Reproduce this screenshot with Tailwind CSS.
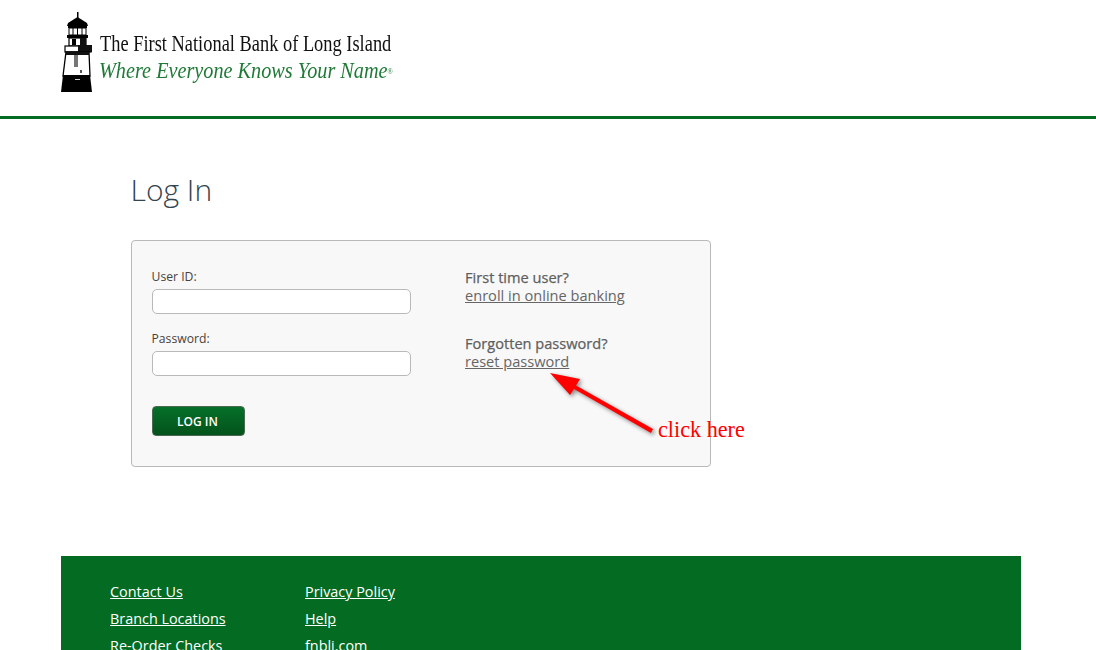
<!DOCTYPE html>
<html lang="en">
<head>
  <meta charset="UTF-8" />
  <title>Log In - The First National Bank of Long Island</title>
  <script src="https://cdn.jsdelivr.net/npm/@tailwindcss/browser@4"></script>
</head>
<body class="h-[650px] overflow-hidden bg-white font-['Open_Sans',sans-serif] text-[#666]">

  <header class="h-[119px] border-b-[3px] border-[#036c22] pl-[61px] pt-[12px] flex items-start">
    <svg width="32" height="80" viewBox="0 0 32 80" class="shrink-0">
      <rect x="16" y="0" width="1.5" height="8" fill="#000"/>
      <path d="M16.500 5 L26 11 L27 14 L6 14 L7 11 Z" fill="#000"/>
      <rect x="7" y="14" width="19" height="2" fill="#000"/>
      <rect x="8" y="16" width="17" height="7" fill="#fff" stroke="#000" stroke-width="1"/>
      <path d="M12 16 V23 M16.500 16 V23 M21 16 V23" stroke="#000" stroke-width="1"/>
      <rect x="6" y="23" width="21" height="3" fill="#000"/>
      <rect x="8" y="26" width="17" height="8" fill="#fff" stroke="#000" stroke-width="1.2"/>
      <rect x="11" y="27" width="4" height="6" fill="#000"/>
      <rect x="19" y="26" width="6" height="8" fill="#111"/>
      <rect x="4" y="34" width="26" height="6" fill="#fff" stroke="#000" stroke-width="1.200"/>
      <rect x="17" y="33" width="14" height="7" fill="#111"/>
      <path d="M5 40 H28 L29 64 H2 Z" fill="#fff" stroke="#000" stroke-width="1.300"/>
      <rect x="5" y="40" width="23" height="3" fill="#111"/>
      <rect x="13" y="43" width="4" height="12" fill="#777"/>
      <rect x="19" y="58" width="2" height="3" fill="#555"/>
      <path d="M2 63 H29 L31 80 H0 Z" fill="#000"/>
      <rect x="14" y="67" width="5" height="1" fill="#ccc"/>
    </svg>
    <div class="ml-[7px] mt-[19px] font-['Liberation_Serif',serif]">
      <div class="origin-left scale-x-[0.8] text-[23px] leading-[26px] text-[#111] whitespace-nowrap">The First National Bank of Long Island</div>
      <div class="-ml-[1px] mt-[1px] origin-left scale-x-[0.88] text-[23px] leading-[26px] italic text-[#1f7a37] whitespace-nowrap">Where Everyone Knows Your Name<sup class="text-[8px] not-italic">®</sup></div>
    </div>
  </header>

  <main class="relative h-[437px] pl-[131px]">
    <h1 class="-ml-[0.5px] pt-[52px] text-[30px] leading-[38px] font-light text-[#33454f]">Log In</h1>
    <div class="mt-[31px] w-[580px] h-[227px] border border-[#b9b9b9] rounded-[4px] bg-[#f8f8f8] flex">
      <form class="w-[333px] pl-[20px] pt-[27px]">
        <label class="block -ml-[0.5px] text-[12.2px] leading-[17px] text-[#4a3f3a]">User ID:</label>
        <input type="text" class="block mt-[4px] w-[259px] h-[25px] bg-white border border-[#b9b9b9] rounded-[5px]" />
        <label class="block -ml-[0.5px] mt-[16px] text-[12.2px] leading-[17px] text-[#4a3f3a]">Password:</label>
        <input type="password" class="block mt-[4px] w-[259px] h-[25px] bg-white border border-[#b9b9b9] rounded-[5px]" />
        <button type="button" class="block mt-[30px] w-[93px] h-[30px] pt-[1px] pr-[2px] rounded-[4px] border border-[#4a6b52] bg-linear-to-b from-[#06702a] to-[#03531a] text-white text-[12px] font-semibold">LOG IN</button>
      </form>
      <div class="pt-[28px] text-[14.6px] leading-[18px]">
        <p class="font-medium leading-[17px] text-[#5f5f5f] [-webkit-text-stroke:0.25px_#5f5f5f]">First time user?</p>
        <a href="#" class="underline">enroll in online banking</a>
        <p class="mt-[31px] font-medium leading-[17px] text-[#5f5f5f] [-webkit-text-stroke:0.25px_#5f5f5f]">Forgotten password?</p>
        <a href="#" class="underline">reset password</a>
      </div>
    </div>

    <!-- annotation drawn over the page -->
    <svg width="130" height="80" viewBox="0 0 130 80" class="absolute left-[540px] top-[250px] drop-shadow-[2px_2px_2px_rgba(0,0,0,0.45)]">
      <path d="M10 4 L40 10 L36 16.500 L113 60 L111 64 L34 20 L30 26 Z" fill="#ff0000"/>
    </svg>
    <span class="absolute left-[658px] top-[297px] font-['Liberation_Serif',serif] text-[22.2px] leading-[28px] text-[#ff0000] whitespace-nowrap">click here</span>
  </main>

  <footer class="ml-[61px] w-[960px] h-[94px] overflow-hidden bg-[#036c22] pl-[49px] pt-[22px] flex text-[14.4px] leading-[27px] text-white">
    <ul class="w-[195px]">
      <li><a href="#" class="underline">Contact Us</a></li>
      <li><a href="#" class="underline">Branch Locations</a></li>
      <li><a href="#" class="underline">Re-Order Checks</a></li>
    </ul>
    <ul>
      <li><a href="#" class="underline">Privacy Policy</a></li>
      <li><a href="#" class="underline">Help</a></li>
      <li><a href="#" class="underline">fnbli.com</a></li>
    </ul>
  </footer>

</body>
</html>
